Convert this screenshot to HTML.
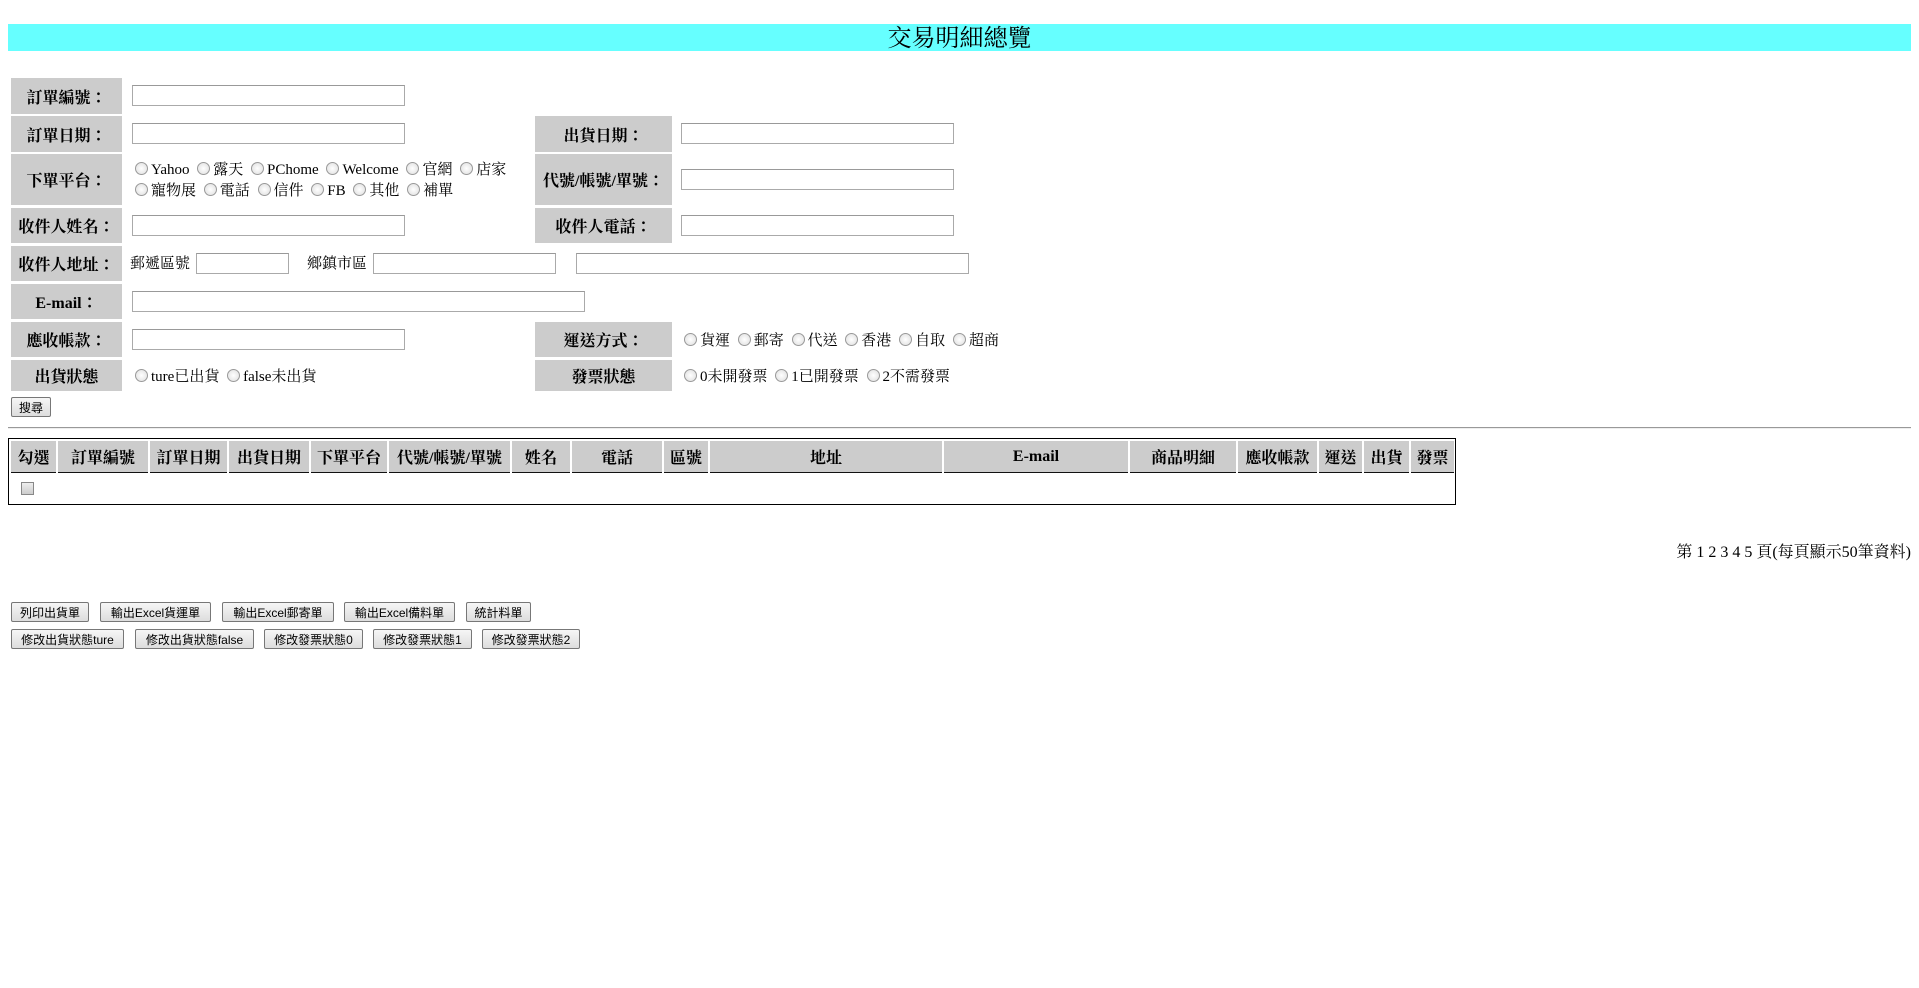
<!DOCTYPE html>
<html><head><meta charset="utf-8"><style>
body{margin:0;width:1919px;height:988px;position:relative;background:#fff;font-family:"Liberation Serif","Noto Serif CJK TC",serif;font-size:16px;color:#000;overflow:hidden}
.a{position:absolute}
.title{left:8px;top:24px;width:1903px;height:27px;background:#66ffff;text-align:center;font-size:24px;line-height:31px}
.lb{position:absolute;background:#ccc;font-weight:bold;text-align:center;display:flex;align-items:center;justify-content:center;font-size:16px}
.in{position:absolute;border:1px solid #aaa;border-top-color:#999;background:#fff;box-sizing:border-box;height:21px}
.r{display:inline-block;width:11px;height:11px;border:1px solid #999;border-radius:50%;background:radial-gradient(#fff,#ddd);vertical-align:-1px;margin:0 3px 0 4px}
.t{position:absolute;white-space:nowrap;font-size:16px;line-height:20px}
.rt{font-size:15px}
.th{position:absolute;top:441px;height:31px;background:#ccc;font-weight:bold;display:flex;align-items:center;justify-content:center;font-size:16px;border-bottom:1px solid #111}
.btn{position:absolute;height:20px;box-sizing:border-box;border:1px solid #777;border-radius:2px;background:linear-gradient(#f6f6f6,#ddd);font-family:"Liberation Sans","Noto Sans CJK TC",sans-serif;font-size:12px;display:flex;align-items:center;justify-content:center;white-space:nowrap}
</style></head><body>
<div class="a title">交易明細總覽</div>

<div class="lb" style="left:11px;top:78px;width:111px;height:36px">訂單編號：</div>
<div class="in" style="left:132px;top:85px;width:273px"></div>

<div class="lb" style="left:11px;top:116px;width:111px;height:36px">訂單日期：</div>
<div class="in" style="left:132px;top:123px;width:273px"></div>
<div class="lb" style="left:535px;top:116px;width:137px;height:36px">出貨日期：</div>
<div class="in" style="left:681px;top:123px;width:273px"></div>

<div class="lb" style="left:11px;top:154px;width:111px;height:51px">下單平台：</div>
<div class="t rt" style="left:131px;top:160px"><span class="r"></span>Yahoo <span class="r"></span>露天 <span class="r"></span>PChome <span class="r"></span>Welcome <span class="r"></span>官網 <span class="r"></span>店家</div>
<div class="t rt" style="left:131px;top:181px"><span class="r"></span>寵物展 <span class="r"></span>電話 <span class="r"></span>信件 <span class="r"></span>FB <span class="r"></span>其他 <span class="r"></span>補單</div>
<div class="lb" style="left:535px;top:154px;width:137px;height:51px">代號/帳號/單號：</div>
<div class="in" style="left:681px;top:169px;width:273px"></div>

<div class="lb" style="left:11px;top:208px;width:111px;height:35px">收件人姓名：</div>
<div class="in" style="left:132px;top:215px;width:273px"></div>
<div class="lb" style="left:535px;top:208px;width:137px;height:35px">收件人電話：</div>
<div class="in" style="left:681px;top:215px;width:273px"></div>

<div class="lb" style="left:11px;top:246px;width:111px;height:35px">收件人地址：</div>
<div class="t rt" style="left:130px;top:254px">郵遞區號</div>
<div class="in" style="left:196px;top:253px;width:93px"></div>
<div class="t rt" style="left:307px;top:254px">鄉鎮市區</div>
<div class="in" style="left:373px;top:253px;width:183px"></div>
<div class="in" style="left:576px;top:253px;width:393px"></div>

<div class="lb" style="left:11px;top:284px;width:111px;height:35px">E-mail：</div>
<div class="in" style="left:132px;top:291px;width:453px"></div>

<div class="lb" style="left:11px;top:322px;width:111px;height:35px">應收帳款：</div>
<div class="in" style="left:132px;top:329px;width:273px"></div>
<div class="lb" style="left:535px;top:322px;width:137px;height:35px">運送方式：</div>
<div class="t rt" style="left:680px;top:331px"><span class="r"></span>貨運 <span class="r"></span>郵寄 <span class="r"></span>代送 <span class="r"></span>香港 <span class="r"></span>自取 <span class="r"></span>超商</div>

<div class="lb" style="left:11px;top:360px;width:111px;height:31px">出貨狀態</div>
<div class="t rt" style="left:131px;top:367px"><span class="r"></span>ture已出貨 <span class="r"></span>false未出貨</div>
<div class="lb" style="left:535px;top:360px;width:137px;height:31px">發票狀態</div>
<div class="t rt" style="left:680px;top:367px"><span class="r"></span>0未開發票 <span class="r"></span>1已開發票 <span class="r"></span>2不需發票</div>

<div class="btn" style="left:11px;top:397px;width:40px">搜尋</div>

<div class="a" style="left:8px;top:427px;width:1903px;height:0;border-top:1px solid #999;border-bottom:1px solid #eee"></div>

<div class="a" style="left:8px;top:438px;width:1448px;height:67px;border:1px solid #000;box-sizing:border-box"></div>
<div class="th" style="left:11px;width:45px">勾選</div>
<div class="th" style="left:58px;width:90px">訂單編號</div>
<div class="th" style="left:150px;width:77px">訂單日期</div>
<div class="th" style="left:229px;width:80px">出貨日期</div>
<div class="th" style="left:311px;width:76px">下單平台</div>
<div class="th" style="left:389px;width:121px">代號/帳號/單號</div>
<div class="th" style="left:512px;width:58px">姓名</div>
<div class="th" style="left:572px;width:90px">電話</div>
<div class="th" style="left:664px;width:44px">區號</div>
<div class="th" style="left:710px;width:232px">地址</div>
<div class="th" style="left:944px;width:184px">E-mail</div>
<div class="th" style="left:1130px;width:106px">商品明細</div>
<div class="th" style="left:1238px;width:79px">應收帳款</div>
<div class="th" style="left:1319px;width:43px">運送</div>
<div class="th" style="left:1364px;width:45px">出貨</div>
<div class="th" style="left:1411px;width:43px">發票</div>
<div class="a" style="left:21px;top:482px;width:11px;height:11px;border:1px solid #888;background:linear-gradient(#eee,#ccc)"></div>

<div class="t" style="right:8px;top:543px">第 1 2 3 4 5 頁(每頁顯示50筆資料)</div>

<div class="btn" style="left:11px;top:602px;width:78px">列印出貨單</div>
<div class="btn" style="left:100px;top:602px;width:111px">輸出Excel貨運單</div>
<div class="btn" style="left:222px;top:602px;width:112px">輸出Excel郵寄單</div>
<div class="btn" style="left:344px;top:602px;width:111px">輸出Excel備料單</div>
<div class="btn" style="left:466px;top:602px;width:65px">統計料單</div>
<div class="btn" style="left:11px;top:629px;width:113px">修改出貨狀態ture</div>
<div class="btn" style="left:135px;top:629px;width:119px">修改出貨狀態false</div>
<div class="btn" style="left:264px;top:629px;width:99px">修改發票狀態0</div>
<div class="btn" style="left:373px;top:629px;width:99px">修改發票狀態1</div>
<div class="btn" style="left:482px;top:629px;width:98px">修改發票狀態2</div>
</body></html>
